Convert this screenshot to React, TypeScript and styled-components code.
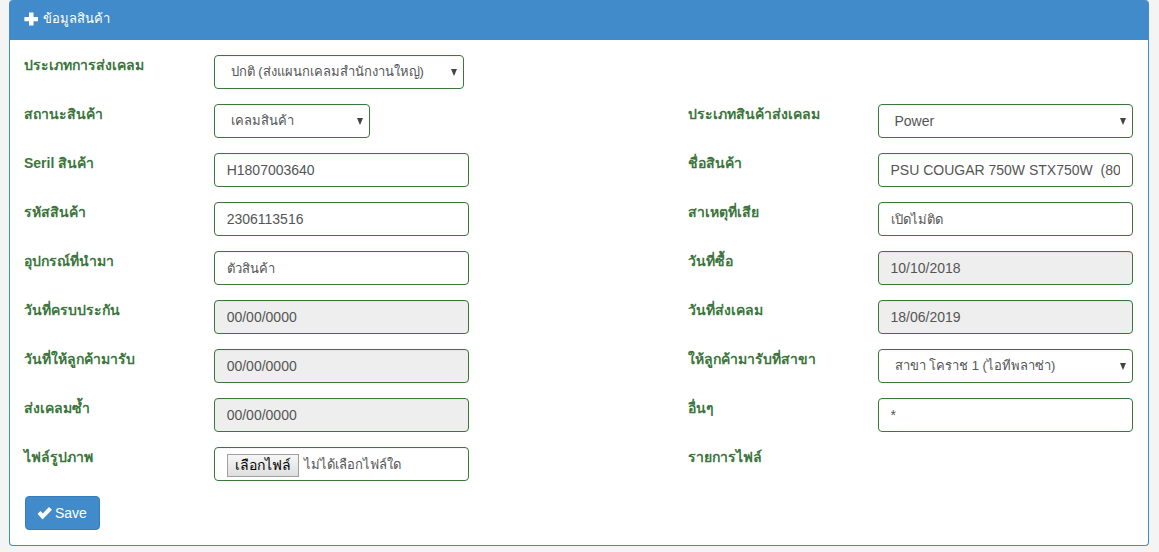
import React, { useRef } from "react";
import styled, { createGlobalStyle } from "styled-components";

const GlobalStyle = createGlobalStyle`
  *, *::before, *::after { box-sizing: border-box; }
  body {
    margin: 0;
    background: #f4f4f4;
    color: #555;
    font-family: "Liberation Sans", Arial, sans-serif;
    font-size: 14px;
    line-height: 20px;
  }
  button, input, select { font: inherit; }
`;

const Page = styled.main`
  padding: 0 10px 6px 9px;
`;

const Panel = styled.section`
  background: #fff;
  border: 1px solid #428bca;
  border-top: 0;
  border-radius: 4px;
`;

const PanelHeading = styled.h1`
  display: flex;
  align-items: center;
  gap: 4px;
  height: 40px;
  margin: 0;
  padding: 0 14px 2px;
  background: #428bca;
  border-radius: 3px 3px 0 0;
  color: #fff;
  font-size: 13px;
  font-weight: 400;
`;

const PanelForm = styled.form`
  padding: 15px 0;
`;

const Row = styled.div`
  display: grid;
  grid-template-columns: repeat(12, minmax(0, 1fr));
  min-height: 34px;
  margin-bottom: 15px;
`;

const FieldLabel = styled.label<{ $start: number }>`
  grid-column: ${({ $start }) => $start} / span 2;
  padding: 0 14px;
  color: #3c763d;
  font-weight: 700;
  white-space: nowrap;
`;

const FieldCell = styled.div<{ $start: number }>`
  grid-column: ${({ $start }) => $start} / span 3;
  padding: 0 15px 0 14px;
`;

const TextInput = styled.input<{ $thai?: boolean }>`
  display: block;
  width: 100%;
  height: 34px;
  padding: 6px 12px;
  border: 1px solid #3c763d;
  border-radius: 4px;
  background: #fff;
  color: #555;
  font-size: ${({ $thai }) => ($thai ? 13 : 14)}px;
  outline: 0;
  box-shadow: inset 0 1px 1px rgba(0, 0, 0, 0.04);

  &:read-only { background: #eee; }
`;

const SelectWrap = styled.div<{ $width: string }>`
  position: relative;
  width: ${({ $width }) => $width};
  max-width: 100%;
`;

const Select = styled.select<{ $thai?: boolean }>`
  appearance: none;
  display: block;
  width: 100%;
  height: 34px;
  padding: 6px 24px 6px 16px;
  border: 1px solid #3c763d;
  border-radius: 4px;
  background: #fff;
  color: #555;
  font-size: ${({ $thai }) => ($thai ? 13 : 14)}px;
  box-shadow: inset 0 1px 1px rgba(0, 0, 0, 0.04);
`;

const Caret = styled.svg`
  position: absolute;
  top: 14px;
  right: 7px;
  pointer-events: none;
`;

const FileBox = styled.div`
  display: flex;
  align-items: center;
  gap: 5px;
  height: 34px;
  padding: 4px 12px 2px;
  border: 1px solid #3c763d;
  border-radius: 4px;
  background: #fff;
  font-size: 13px;
  white-space: nowrap;
  box-shadow: inset 0 1px 1px rgba(0, 0, 0, 0.04);
`;

const FileButton = styled.button`
  height: 23px;
  padding: 0 7px;
  border: 1px solid #a0a0a0;
  border-radius: 0;
  background: linear-gradient(#f6f6f6, #dedede);
  color: #000;
  font-size: 14px;
  line-height: 20px;
`;

const SaveButton = styled.button`
  display: flex;
  align-items: center;
  gap: 3px;
  height: 34px;
  margin-left: 15px;
  padding: 0 12px 0 11px;
  border: 1px solid #357ebd;
  border-radius: 4px;
  background: #428bca;
  color: #fff;
`;

interface Field {
  id: string;
  label: string;
  kind: "text" | "readonly" | "select" | "file" | "none";
  value?: string;
  width?: string;
}

const rows: [Field, Field?][] = [
  [{ id: "claimType", label: "ประเภทการส่งเคลม", kind: "select", value: "ปกติ (ส่งแผนกเคลมสำนักงานใหญ่)", width: "250px" }],
  [
    { id: "status", label: "สถานะสินค้า", kind: "select", value: "เคลมสินค้า", width: "156px" },
    { id: "productType", label: "ประเภทสินค้าส่งเคลม", kind: "select", value: "Power" },
  ],
  [
    { id: "serial", label: "Seril สินค้า", kind: "text", value: "H1807003640" },
    { id: "name", label: "ชื่อสินค้า", kind: "text", value: "PSU COUGAR 750W STX750W  (80+)" },
  ],
  [
    { id: "code", label: "รหัสสินค้า", kind: "text", value: "2306113516" },
    { id: "cause", label: "สาเหตุที่เสีย", kind: "text", value: "เปิดไม่ติด" },
  ],
  [
    { id: "equipment", label: "อุปกรณ์ที่นำมา", kind: "text", value: "ตัวสินค้า" },
    { id: "bought", label: "วันที่ซื้อ", kind: "readonly", value: "10/10/2018" },
  ],
  [
    { id: "warranty", label: "วันที่ครบประกัน", kind: "readonly", value: "00/00/0000" },
    { id: "sent", label: "วันที่ส่งเคลม", kind: "readonly", value: "18/06/2019" },
  ],
  [
    { id: "pickup", label: "วันที่ให้ลูกค้ามารับ", kind: "readonly", value: "00/00/0000" },
    { id: "branch", label: "ให้ลูกค้ามารับที่สาขา", kind: "select", value: "สาขา โคราช 1 (ไอทีพลาซ่า)" },
  ],
  [
    { id: "resend", label: "ส่งเคลมซ้ำ", kind: "readonly", value: "00/00/0000" },
    { id: "other", label: "อื่นๆ", kind: "text", value: "*" },
  ],
  [
    { id: "image", label: "ไฟล์รูปภาพ", kind: "file" },
    { id: "files", label: "รายการไฟล์", kind: "none" },
  ],
];

const hasThai = (text = "") => /[\u0E00-\u0E7F]/.test(text);

function FilePicker({ id }: { id: string }) {
  const input = useRef<HTMLInputElement>(null);
  return (
    <FileBox>
      <input ref={input} id={id} type="file" hidden />
      <FileButton type="button" onClick={() => input.current?.click()}>เลือกไฟล์</FileButton>
      <span>ไม่ได้เลือกไฟล์ใด</span>
    </FileBox>
  );
}

function Control({ field }: { field: Field }) {
  switch (field.kind) {
    case "select":
      return (
        <SelectWrap $width={field.width ?? "100%"}>
          <Select id={field.id} defaultValue={field.value} $thai={hasThai(field.value)}>
            <option>{field.value}</option>
          </Select>
          <Caret width="6" height="7" viewBox="0 0 6 7" aria-hidden="true">
            <path d="M0 0H6L3 7Z" fill="#444" />
          </Caret>
        </SelectWrap>
      );
    case "file":
      return <FilePicker id={field.id} />;
    case "none":
      return null;
    default:
      return (
        <TextInput
          id={field.id}
          type="text"
          defaultValue={field.value}
          readOnly={field.kind === "readonly"}
          $thai={hasThai(field.value)}
        />
      );
  }
}

function FieldGroup({ field, start }: { field: Field; start: number }) {
  const empty = field.kind === "none";
  return (
    <>
      <FieldLabel as={empty ? "span" : "label"} $start={start} htmlFor={empty ? undefined : field.id}>
        {field.label}
      </FieldLabel>
      <FieldCell $start={start + 2}>
        <Control field={field} />
      </FieldCell>
    </>
  );
}

export default function App() {
  return (
    <Page>
      <GlobalStyle />
      <Panel>
        <PanelHeading>
          <svg width="15" height="14" viewBox="0 0 15 14" aria-hidden="true">
            <path d="M5 0.5H9.5V5H14V9.3H9.5V13.5H5V9.3H0.4V5H5Z" fill="#fff" />
          </svg>
          ข้อมูลสินค้า
        </PanelHeading>
        <PanelForm onSubmit={(e) => e.preventDefault()}>
          {rows.map(([left, right]) => (
            <Row key={left.id}>
              <FieldGroup field={left} start={1} />
              {right && <FieldGroup field={right} start={8} />}
            </Row>
          ))}
          <SaveButton type="submit">
            <svg width="15" height="14" viewBox="0 0 15 14" aria-hidden="true">
              <path d="M0.6 8L3.4 5.1L5.8 7.4L12 0.9L15 3.7L6 13.1Q5.6 13.4 5.2 13Z" fill="#fff" />
            </svg>
            Save
          </SaveButton>
        </PanelForm>
      </Panel>
    </Page>
  );
}
